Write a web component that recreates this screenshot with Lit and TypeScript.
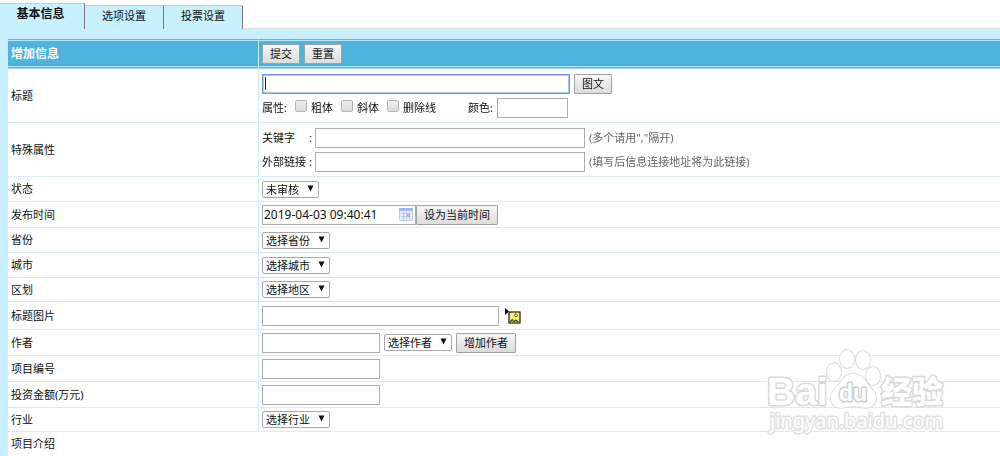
import { LitElement, html, css, svg, nothing } from "lit";
import { customElement, property } from "lit/decorators.js";

const base = css`
  :host {
    font-family: "Noto Sans", "Noto Sans CJK SC", sans-serif;
    font-size: 11px;
    line-height: 16px;
    color: #111;
  }
  * {
    box-sizing: border-box;
  }
  input,
  select,
  button {
    font: inherit;
    color: inherit;
    margin: 0;
  }
`;

/* Calendar glyph shown at the end of the date box. */
const calendarIcon = svg`<svg class="calendar" viewBox="0 0 14 13" width="14" height="13" aria-hidden="true">
  <rect x="0.5" y="0.5" width="13" height="12" rx="1" fill="#e6eefb" stroke="#bfcbe0"/>
  <rect x="0" y="0" width="14" height="3" rx="1" fill="#9bb8ea"/>
  <path d="M2 5.5h10M2 8.5h10M4.500 3.500v8M7.500 3.500v8M10.500 3.500v8" stroke="#b5caee" stroke-width="1"/>
  <rect x="8" y="6" width="3" height="3" fill="#e8a08c"/>
</svg>`;

const pictureIcon = svg`<svg viewBox="0 0 16 16" width="16" height="16" aria-hidden="true">
  <path d="M0 0l4 3.500L0 7z" fill="#000"/>
  <rect x="4" y="4" width="11" height="11" fill="#fbf36a" stroke="#1c1c10" stroke-width="1.200"/>
  <circle cx="11" cy="7.300" r="1.400" fill="#fff9b0" stroke="#55552a" stroke-width="0.900"/>
  <path d="M5 14.300v-2l2-1.500 2 1.500 2-1 3 2v1z" fill="#8f8f58"/>
  <path d="M5.500 13.500l2-2 1.500 2 2-1.500 2 2" fill="none" stroke="#33331c" stroke-width="0.800"/>
</svg>`;

@customElement("drop-down")
class DropDown extends LitElement {
  @property() label = "";
  @property() text = "";

  static styles = [
    base,
    css`
      :host {
        display: inline-grid;
      }
      select,
      .arrow {
        grid-area: 1 / 1;
      }
      select {
        appearance: none;
        height: 17px;
        padding: 0 19px 0 3px;
        border: 1px solid #a9a9a9;
        border-radius: 2px;
        background: #fff;
        line-height: 15px;
      }
      .arrow {
        justify-self: end;
        align-self: center;
        margin: 0 5px 2px 0;
        pointer-events: none;
      }
    `,
  ];

  render() {
    return html`<select aria-label=${this.label}>
        <option>${this.text}</option>
      </select>
      <svg class="arrow" width="7" height="7" viewBox="0 0 7 7" aria-hidden="true">
        <path d="M0.500 0.500h6L3.500 6.500z" fill="#111" />
      </svg>`;
  }
}

@customElement("site-watermark")
class SiteWatermark extends LitElement {
  static styles = css`
    :host {
      display: block;
      pointer-events: none;
    }
    svg {
      display: block;
    }
    text,
    .paw {
      fill: #fff;
      stroke: #dadada;
      stroke-width: 3px;
      paint-order: stroke;
      stroke-linejoin: round;
    }
    .paw {
      stroke-width: 2px;
    }
    .brand {
      font: bold 39px "Liberation Sans", sans-serif;
    }
    .du {
      font: bold 23px "Liberation Sans", sans-serif;
      stroke: #cfcfcf;
    }
    .cjk {
      font: 900 31px "Noto Sans CJK SC", sans-serif;
    }
    .site {
      font: 20px "Noto Sans", sans-serif;
      stroke: #e2e2e2;
    }
  `;

  render() {
    return html`<svg width="182" height="92" viewBox="0 0 182 92" aria-hidden="true">
      <text class="brand" x="0" y="56">Bai</text>
      <ellipse class="paw" cx="67" cy="23" rx="7" ry="9" />
      <ellipse class="paw" cx="80" cy="10" rx="7" ry="9" />
      <ellipse class="paw" cx="96" cy="11" rx="7" ry="9" />
      <ellipse class="paw" cx="106" cy="27" rx="7" ry="9" />
      <path
        class="paw"
        d="M86 25C78 25 75 31 71 37C66 42 63 46 64 51C66 58 72 60 78 58C83 57 89 57 94 58C101 60 107 58 109 51C110 46 107 42 102 37C98 31 94 25 86 25Z"
      />
      <text class="du" x="72" y="52">du</text>
      <text class="cjk" x="114" y="54">经验</text>
      <text class="site" x="3" y="79">jingyan.baidu.com</text>
    </svg>`;
  }
}

@customElement("app-root")
class AppRoot extends LitElement {
  static styles = [
    base,
    css`
      :host {
        display: block;
        position: relative;
        overflow: hidden;
        min-height: 100vh;
        background: #fff;
      }
      .tabs {
        display: flex;
        align-items: flex-start;
        padding-top: 3px;
        position: relative;
        margin-bottom: -1px;
      }
      .tab {
        height: 24px;
        width: 79px;
        margin-top: 2px;
        padding: 0 0 4px;
        border: 0 solid #888;
        border-top: 1px solid #ccc;
        border-right-width: 1px;
        border-right-color: #777;
        background: #c8f0ff;
        line-height: 18px;
        text-align: center;
      }
      .tab.current {
        width: 85px;
        height: 26px;
        margin-top: 0;
        font-size: 12px;
        font-weight: bold;
        padding: 0 3px 6px 0;
      }
      .panel {
        border-top: 1px solid #e0dede;
        border-left: 8px solid #c8f0ff;
      }
      .band {
        height: 10px;
        background: #c8f0ff;
      }
      table {
        width: 100%;
        border-collapse: separate;
        border-spacing: 0;
      }
      tr {
        height: 26px;
      }
      th,
      td {
        padding: 0 3px;
        text-align: left;
        font-weight: normal;
        vertical-align: middle;
        border-bottom: 1px solid #d9ebf9;
      }
      th {
        width: 251px;
        border-right: 1px solid #d3ecfc;
      }
      .head {
        height: 30px;
      }
      .head th,
      .head td {
        background: #4fb3df;
        border-top: 1px solid #60b5dd;
        border-bottom: 1px solid #a5dcf3;
        box-shadow: inset 0 1px #b5e4f8, inset 0 -1px #5bb5dc, inset 0 -2px #b5e4f8;
      }
      .head th {
        color: #fff;
        font-size: 12px;
        font-weight: bold;
      }
      .tall {
        height: 54px;
      }
      .tight {
        height: 25px;
      }
      .short {
        height: 24px;
      }
      .roomy {
        height: 28px;
      }
      .last {
        height: 25px;
      }
      .last th {
        border-right-color: transparent;
      }
      .line {
        display: flex;
        align-items: center;
      }
      .line + .line {
        margin-top: 4px;
      }
      .gap {
        gap: 4px;
      }
      .box {
        height: 20px;
        padding: 0 1px;
        border: 1px solid #adadad;
        background: #fff;
        outline: none;
      }
      .title {
        width: 308px;
        border: 1px solid #6f98e0;
        box-shadow: inset 0 0 0 1px #a9c5f5;
        padding: 0 2px;
        caret-color: transparent;
      }
      .title:focus:placeholder-shown {
        background: linear-gradient(#222, #222) 2px center / 1px 13px no-repeat #fff;
      }
      .long {
        width: 270px;
      }
      .picture {
        width: 237px;
      }
      .small {
        width: 118px;
      }
      .color {
        width: 71px;
      }
      .date {
        display: flex;
        align-items: center;
        width: 154px;
      }
      .date input {
        flex: 1;
        min-width: 0;
        padding: 0;
        border: 0;
        outline: none;
        background: none;
        font-size: 12px;
      }
      .calendar {
        margin-right: 1px;
      }
      .button {
        height: 20px;
        padding: 0 7px;
        border: 1px solid #a2a2a2;
        border-radius: 1px;
        background: linear-gradient(#f6f6f6, #dcdcdc);
        line-height: 16px;
      }
      .icon {
        display: flex;
        padding: 0;
        border: 0;
        background: none;
        margin-left: 2px;
      }
      .check {
        display: flex;
        align-items: center;
        gap: 4px;
        margin-right: 8px;
      }
      .check input {
        appearance: none;
        width: 12px;
        height: 12px;
        margin-bottom: 4px;
        border: 1px solid #b5b5b5;
        border-radius: 2px;
        background: linear-gradient(#eee, #dcdcdc);
      }
      .lead {
        margin-right: 8px;
      }
      .color-label {
        margin: 0 4px 0 24px;
      }
      .field-label {
        display: flex;
        justify-content: space-between;
        width: 50px;
        margin-right: 3px;
      }
      .hint {
        margin-left: 4px;
        color: #666;
      }
      .mark {
        position: absolute;
        right: 51px;
        top: 349px;
      }
    `,
  ];

  firstUpdated() {
    this.renderRoot.querySelector<HTMLInputElement>("#title")?.focus();
  }

  row(label: string, size: string, content: unknown, id = "") {
    return html`<tr class=${size}>
      <th scope="row">${id ? html`<label for=${id}>${label}</label>` : label}</th>
      <td>${content}</td>
    </tr>`;
  }

  choice(label: string, text: string) {
    return html`<div class="line"><drop-down label=${label} text=${text}></drop-down></div>`;
  }

  check(label: string) {
    return html`<label class="check"><input type="checkbox" />${label}</label>`;
  }

  render() {
    return html`
      <div class="tabs">
        <button class="tab current">基本信息</button>
        <button class="tab">选项设置</button>
        <button class="tab">投票设置</button>
      </div>
      <form class="panel" @submit=${(e: Event) => e.preventDefault()}>
        <div class="band"></div>
        <table>
          <tr class="head">
            <th scope="row">增加信息</th>
            <td>
              <div class="line gap">
                <button class="button">提交</button>
                <button class="button" type="reset">重置</button>
              </div>
            </td>
          </tr>
          ${this.row(
            "标题",
            "tall",
            html`<div class="line gap">
                <input id="title" class="box title" placeholder=" " />
                <button class="button" type="button">图文</button>
              </div>
              <div class="line">
                <span class="lead">属性:</span>
                ${this.check("粗体")}${this.check("斜体")}${this.check("删除线")}
                <label class="color-label" for="color">颜色:</label>
                <input id="color" class="box color" />
              </div>`,
            "title",
          )}
          ${this.row(
            "特殊属性",
            "tall",
            html`<div class="line">
                <label class="field-label" for="keys"><span>关键字</span><span>:</span></label>
                <input id="keys" class="box long" />
                <span class="hint">(多个请用","隔开)</span>
              </div>
              <div class="line">
                <label class="field-label" for="link"><span>外部链接</span><span>:</span></label>
                <input id="link" class="box long" />
                <span class="hint">(填写后信息连接地址将为此链接)</span>
              </div>`,
          )}
          ${this.row("状态", "tight", this.choice("状态", "未审核"))}
          ${this.row(
            "发布时间",
            "",
            html`<div class="line">
              <span class="box date"><input id="date" value="2019-04-03 09:40:41" />${calendarIcon}</span>
              <button class="button" type="button">设为当前时间</button>
            </div>`,
            "date",
          )}
          ${this.row("省份", "tight", this.choice("省份", "选择省份"))}
          ${this.row("城市", "tight", this.choice("城市", "选择城市"))}
          ${this.row("区划", "short", this.choice("区划", "选择地区"))}
          ${this.row(
            "标题图片",
            "roomy",
            html`<div class="line gap">
              <input id="picture" class="box picture" />
              <button class="icon" type="button" aria-label="标题图片">${pictureIcon}</button>
            </div>`,
            "picture",
          )}
          ${this.row(
            "作者",
            "",
            html`<div class="line gap">
              <input id="author" class="box small" />
              <drop-down label="作者" text="选择作者"></drop-down>
              <button class="button" type="button">增加作者</button>
            </div>`,
            "author",
          )}
          ${this.row("项目编号", "", html`<div class="line"><input id="code" class="box small" /></div>`, "code")}
          ${this.row("投资金额(万元)", "", html`<div class="line"><input id="sum" class="box small" /></div>`, "sum")}
          ${this.row("行业", "short", this.choice("行业", "选择行业"))}
          ${this.row("项目介绍", "last", nothing)}
        </table>
      </form>
      <site-watermark class="mark"></site-watermark>
    `;
  }
}
